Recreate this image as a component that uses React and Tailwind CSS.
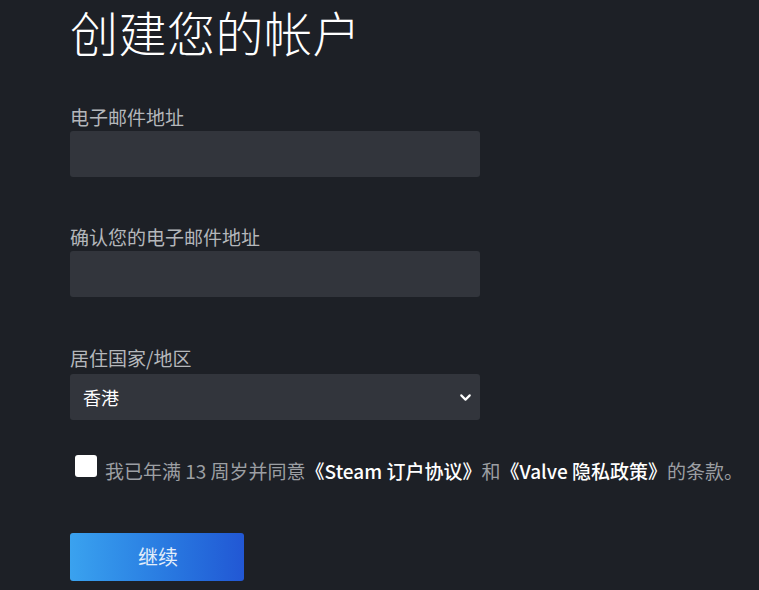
import { ChevronDown } from 'lucide-react';

const FONT = "font-['Noto_Sans_CJK_SC','Liberation_Sans',sans-serif]";

function Field({ label, className = '' }) {
  return (
    <div className={className}>
      <label className="block text-[19px] leading-none text-[#b4b7bb]">{label}</label>
      <input
        type="text"
        className="mt-[5px] block h-[46px] w-[410px] rounded-[3px] bg-[#32353c] px-3 text-[17px] text-white outline-none"
      />
    </div>
  );
}

export default function App() {
  return (
    <div className={`min-h-[590px] w-full bg-[#1d2026] pl-[70px] pt-[7px] ${FONT}`}>
      <h1 className="text-[48px] font-light leading-none tracking-[0.5px] text-white">创建您的帐户</h1>

      <Field label="电子邮件地址" className="mt-[52px]" />
      <Field label="确认您的电子邮件地址" className="mt-[50px]" />

      <div className="mt-[51px]">
        <label className="block text-[19px] leading-none text-[#b4b7bb]">居住国家/地区</label>
        <div className="mt-[7px] flex h-[46px] w-[410px] items-center justify-between rounded-[3px] bg-[#32353c] pl-[13px] pr-[6px]">
          <span className="text-[18px] text-white">香港</span>
          <ChevronDown size={17} strokeWidth={3} className="text-white" />
        </div>
      </div>

      <div className="mt-[35px] flex items-start gap-[8px] pl-[5px]">
        <span className="block h-[22px] w-[22px] shrink-0 rounded-[3px] bg-white" />
        <p className="mt-[6px] text-[19px] leading-none text-[#9c9fa3]">
          我已年满 13 周岁并同意
          <span className="font-medium text-white">《Steam 订户协议》</span>和
          <span className="font-medium text-white">《Valve 隐私政策》</span>的条款。
        </p>
      </div>

      <button className="mt-[53px] flex h-[48px] w-[174px] items-center justify-center rounded-[3px] bg-gradient-to-r from-[#3aa2ef] to-[#2257d4] pl-[2px] text-[20px] text-[#e3eefa]">
        继续
      </button>
    </div>
  );
}
